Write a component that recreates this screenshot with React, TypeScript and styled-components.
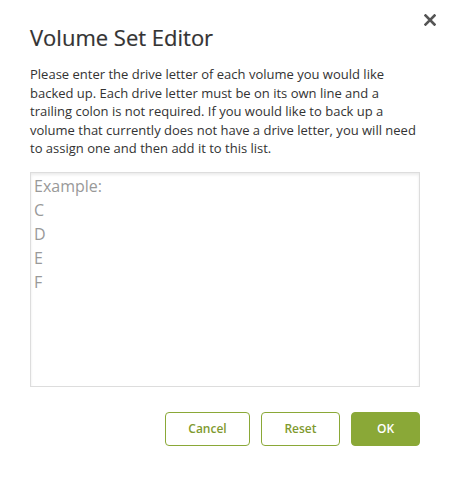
import styled, { createGlobalStyle } from "styled-components";

const Global = createGlobalStyle`
  body {
    margin: 0;
    background: #fff;
    font-family: "Open Sans", "Liberation Sans", sans-serif;
  }
`;

function App() {
  return (
    <>
      <Global />
      <Dialog>
        <Close aria-label="Close">
          <svg width="12" height="12" viewBox="0 0 12 12">
            <path d="M1.5 1.5 L10.5 10.5 M10.5 1.5 L1.5 10.5" stroke="#555" strokeWidth="2.6" strokeLinecap="square" />
          </svg>
        </Close>
        <Title>Volume Set Editor</Title>
        <Intro>
          Please enter the drive letter of each volume you would like backed up. Each drive
          letter must be on its own line and a trailing colon is not required. If you would
          like to back up a volume that currently does not have a drive letter, you will need
          to assign one and then add it to this list.
        </Intro>
        <Drives placeholder={"Example:\nC\nD\nE\nF"} />
        <Footer>
          <Button $width={85}>Cancel</Button>
          <Button $width={79}>Reset</Button>
          <Button $width={69} $primary>OK</Button>
        </Footer>
      </Dialog>
    </>
  );
}

const Dialog = styled.div`
  position: relative;
  width: 450px;
  box-sizing: border-box;
  padding: 22px 30px 30px;
`;

const Close = styled.button`
  position: absolute;
  top: 14px;
  right: 14px;
  width: 12px;
  height: 12px;
  padding: 0;
  border: 0;
  background: none;
  display: flex;
  cursor: pointer;
`;

const Title = styled.h1`
  margin: 0;
  font-size: 22px;
  font-weight: 500;
  line-height: 30px;
  color: #333;
  -webkit-text-stroke: 0.2px #333;
`;

const Intro = styled.p`
  margin: 13px 0 14px;
  font-size: 13px;
  line-height: 18.5px;
  color: #333;
`;

const Drives = styled.textarea`
  display: block;
  width: 100%;
  height: 215px;
  box-sizing: border-box;
  margin: 0;
  padding: 1px 3px;
  border: 1px solid #ddd;
  border-radius: 0;
  box-shadow: inset 0 2px 3px rgba(0, 0, 0, 0.08);
  font-family: "Open Sans", "Liberation Sans", sans-serif;
  font-size: 16px;
  line-height: 24px;
  color: #333;
  resize: none;
  outline: none;

  &::placeholder {
    color: #999;
  }
`;

const Footer = styled.div`
  display: flex;
  justify-content: flex-end;
  gap: 11px;
  margin-top: 25px;
`;

const Button = styled.button<{ $width: number; $primary?: boolean }>`
  width: ${(p) => p.$width}px;
  height: 34px;
  box-sizing: border-box;
  border: 1px solid #8aa837;
  border-radius: 4px;
  background: ${(p) => (p.$primary ? "#8aa837" : "#fff")};
  color: ${(p) => (p.$primary ? "#fff" : "#7f9a2f")};
  font-family: "Open Sans", "Liberation Sans", sans-serif;
  font-size: 12px;
  font-weight: 600;
  cursor: pointer;
`;

export default App;
